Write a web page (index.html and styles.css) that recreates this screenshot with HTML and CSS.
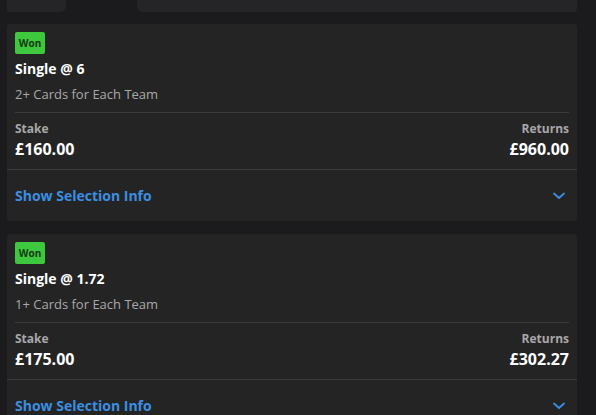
FILE: index.html
```html
<!DOCTYPE html>
<html>
<head>
<meta charset="utf-8">
<link rel="stylesheet" href="styles.css">
</head>
<body>
<div class="page">
  <div class="strip">
    <div class="strip-a"></div>
    <div class="strip-b"></div>
  </div>

  <div class="card">
    <div class="head">
      <span class="badge">Won</span>
      <div class="title">Single @ 6</div>
      <div class="sub">2+ Cards for Each Team</div>
    </div>
    <div class="amounts">
      <div class="col">
        <div class="label">Stake</div>
        <div class="value">£160.00</div>
      </div>
      <div class="col right">
        <div class="label">Returns</div>
        <div class="value">£960.00</div>
      </div>
    </div>
    <div class="show">
      <span>Show Selection Info</span>
      <svg class="chev" width="12" height="8" viewBox="0 0 12 8"><path d="M1 1.5 L6 6 L11 1.5" fill="none" stroke="#3b8ee0" stroke-width="1.8" stroke-linecap="round" stroke-linejoin="round"/></svg>
    </div>
  </div>

  <div class="card">
    <div class="head">
      <span class="badge">Won</span>
      <div class="title">Single @ 1.72</div>
      <div class="sub">1+ Cards for Each Team</div>
    </div>
    <div class="amounts">
      <div class="col">
        <div class="label">Stake</div>
        <div class="value">£175.00</div>
      </div>
      <div class="col right">
        <div class="label">Returns</div>
        <div class="value">£302.27</div>
      </div>
    </div>
    <div class="show">
      <span>Show Selection Info</span>
      <svg class="chev" width="12" height="8" viewBox="0 0 12 8"><path d="M1 1.5 L6 6 L11 1.5" fill="none" stroke="#3b8ee0" stroke-width="1.8" stroke-linecap="round" stroke-linejoin="round"/></svg>
    </div>
  </div>
</div>
</body>
</html>
```

FILE: styles.css
```css
html, body {
  margin: 0;
  padding: 0;
  background: #1b1b1e;
  font-family: "Open Sans", "Noto Sans", sans-serif;
  overflow: hidden;
}

.page {
  width: 570px;
  margin-left: 7px;
  display: flex;
  flex-direction: column;
  gap: 12px;
}

.strip {
  display: flex;
  height: 12px;
}

.strip-a {
  width: 59px;
  background: #252527;
  border-radius: 0 0 6px 0;
}

.strip-b {
  margin-left: 71px;
  flex: 1;
  background: #252527;
  border-radius: 0 0 4px 6px;
}

.card {
  background: #242424;
  border-radius: 4px;
  margin-bottom: 1px;
}

.head {
  padding: 8px 8px 0;
}

.badge {
  display: inline-block;
  width: 30px;
  height: 22px;
  line-height: 22px;
  text-align: center;
  background: #3dc83d;
  color: #153a15;
  font-size: 10px;
  font-weight: 700;
  border-radius: 2px;
  vertical-align: top;
}

.title {
  margin-top: 4px;
  font-size: 14px;
  line-height: 22px;
  font-weight: 700;
  color: #ffffff;
}

.sub {
  margin-top: 4px;
  font-size: 13px;
  line-height: 20px;
  color: #a9a9a9;
  padding-bottom: 8px;
  border-bottom: 1px solid #3b3b3b;
}

.amounts {
  display: flex;
  justify-content: space-between;
  padding: 8px 8px 9px;
}

.col.right {
  text-align: right;
}

.label {
  font-size: 12px;
  line-height: 16px;
  font-weight: 700;
  color: #a8a8a8;
}

.value {
  margin-top: 1px;
  font-size: 16px;
  line-height: 22px;
  font-weight: 700;
  color: #ffffff;
}

.show {
  display: flex;
  align-items: center;
  justify-content: space-between;
  height: 51px;
  padding: 0 12px 0 8px;
  border-top: 1px solid #3b3b3b;
  font-size: 14px;
  font-weight: 700;
  color: #3b8ee0;
}

.chev {
  display: block;
}
```
